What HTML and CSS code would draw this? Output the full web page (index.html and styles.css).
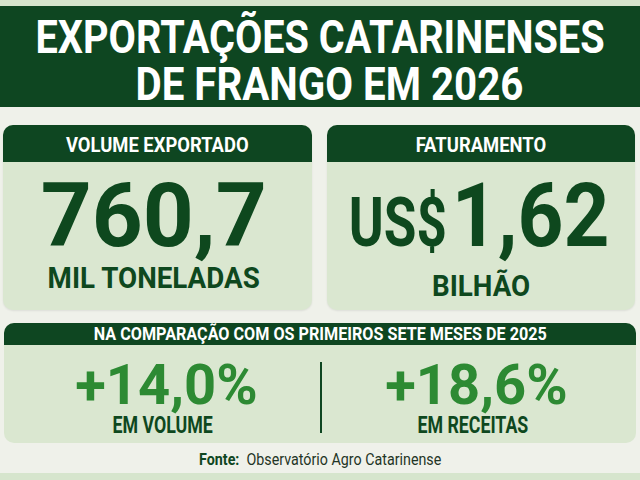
FILE: index.html
```html
<!DOCTYPE html>
<html lang="pt-BR">
<head>
<meta charset="utf-8">
<title>Exportações Catarinenses de Frango em 2026</title>
<link rel="stylesheet" href="styles.css">
</head>
<body>
<div class="page">
  <div class="strip"></div>
  <header class="hero">
    <span class="sq hero-line">EXPORTAÇÕES CATARINENSES</span>
    <span class="sq hero-line hero-line-2">DE FRANGO EM 2026</span>
  </header>
  <section class="cards">
    <div class="card card-volume">
      <div class="card-head"><span class="sq head-text">VOLUME EXPORTADO</span></div>
      <div class="card-body">
        <span class="sq big">760,7</span>
        <span class="sq unit">MIL TONELADAS</span>
      </div>
    </div>
    <div class="card">
      <div class="card-head"><span class="sq head-text">FATURAMENTO</span></div>
      <div class="card-body">
        <div class="big-money"><span class="sq cur">US$</span><span class="sq num">1,62</span></div>
        <span class="sq unit">BILHÃO</span>
      </div>
    </div>
  </section>
  <section class="compare">
    <div class="compare-head"><span class="sq compare-text">NA COMPARAÇÃO COM OS PRIMEIROS SETE MESES DE 2025</span></div>
    <div class="compare-body">
      <div class="stat stat-left">
        <span class="sq pct">+14,0%</span>
        <span class="sq pct-label">EM VOLUME</span>
      </div>
      <div class="divider"></div>
      <div class="stat stat-right">
        <span class="sq pct">+18,6%</span>
        <span class="sq pct-label">EM RECEITAS</span>
      </div>
    </div>
  </section>
  <footer class="source"><span class="sq source-text"><b>Fonte:</b>&nbsp; Observatório Agro Catarinense</span></footer>
  <div class="strip strip-bottom"></div>
</div>
</body>
</html>
```
FILE: styles.css
```css
html, body {
  margin: 0;
  padding: 0;
}
body {
  background: #eff1ea;
  font-family: Roboto, "Liberation Sans", sans-serif;
}
.page {
  width: 640px;
  height: 480px;
  display: flex;
  flex-direction: column;
  overflow: hidden;
}
.sq {
  display: inline-block;
  white-space: nowrap;
  transform-origin: 50% 50%;
}
.strip {
  height: 6px;
  background: #d6e5cd;
  flex: none;
}
.strip-bottom {
  height: 7px;
  margin-top: auto;
}
.hero {
  height: 101px;
  box-sizing: border-box;
  padding-top: 8px;
  background: #0e4621;
  display: flex;
  flex-direction: column;
  align-items: center;
  flex: none;
}
.hero-line {
  color: #ffffff;
  font-weight: 700;
  font-size: 46px;
  line-height: 47px;
  transform: scaleX(0.862);
}
.hero-line-2 {
  margin-left: 18px;
  transform: scaleX(0.876);
}
.cards {
  display: flex;
  gap: 15px;
  margin: 18px 5px 0 3px;
  height: 185px;
  flex: none;
}
.card {
  flex: 1;
  background: #dae7d0;
  border-radius: 10px;
  overflow: hidden;
  display: flex;
  flex-direction: column;
  box-shadow: 0 1px 2px rgba(0, 0, 0, 0.08);
}
.card-head {
  height: 37px;
  box-sizing: border-box;
  padding-top: 3px;
  background: #0e4621;
  display: flex;
  align-items: center;
  justify-content: center;
}
.head-text {
  color: #fff;
  font-weight: 700;
  font-size: 20px;
  line-height: 20px;
  transform: scaleX(0.92);
}
.card-body {
  flex: 1;
  display: flex;
  flex-direction: column;
  align-items: center;
  padding-top: 9px;
}
.card-volume .card-body {
  padding-right: 7px;
}
.big {
  color: #0e481e;
  font-weight: 700;
  font-size: 89px;
  line-height: 89px;
}
.big-money {
  display: flex;
  align-items: baseline;
  color: #0e481e;
  font-weight: 700;
  font-size: 89px;
  line-height: 89px;
  margin-left: -4px;
}
.cur {
  font-size: 68px;
  transform: scaleX(0.78);
  margin-left: -13px;
  margin-right: -10px;
}
.num {
  transform: scaleX(0.9);
  margin-left: -8px;
  margin-right: -8px;
}
.unit {
  margin-top: 3px;
  color: #0e481e;
  font-weight: 700;
  font-size: 30px;
  line-height: 30px;
  transform: scaleX(0.925);
}
.compare {
  margin: 13px 4px 0;
  height: 120px;
  background: #dae7d0;
  border-radius: 10px;
  overflow: hidden;
  display: flex;
  flex-direction: column;
  flex: none;
}
.compare-head {
  height: 22px;
  background: #0e4621;
  display: flex;
  align-items: center;
  justify-content: center;
}
.compare-text {
  color: #fff;
  font-weight: 700;
  font-size: 18px;
  line-height: 20px;
  transform: scaleX(0.898);
}
.compare-body {
  flex: 1;
  display: flex;
  align-items: flex-start;
  padding-top: 13px;
}
.stat {
  flex: 1;
  display: flex;
  flex-direction: column;
  align-items: center;
}
.stat-left {
  padding-left: 8px;
}
.stat-right {
  padding-right: 6px;
}
.pct {
  color: #2d8a33;
  font-weight: 700;
  font-size: 55px;
  line-height: 55px;
  transform: scaleX(1.02);
}
.pct-label {
  margin-right: 7px;
  color: #0e481e;
  font-weight: 700;
  font-size: 24px;
  line-height: 24px;
  transform: scaleX(0.74);
}
.divider {
  width: 2px;
  height: 71px;
  margin-top: 4px;
  background: #0e4621;
  flex: none;
}
.source {
  margin-top: 6px;
  text-align: center;
}
.source-text {
  color: #1f3526;
  font-size: 17px;
  line-height: 20px;
  transform: scaleX(0.84);
}
.source-text b {
  color: #0e4621;
}
```
